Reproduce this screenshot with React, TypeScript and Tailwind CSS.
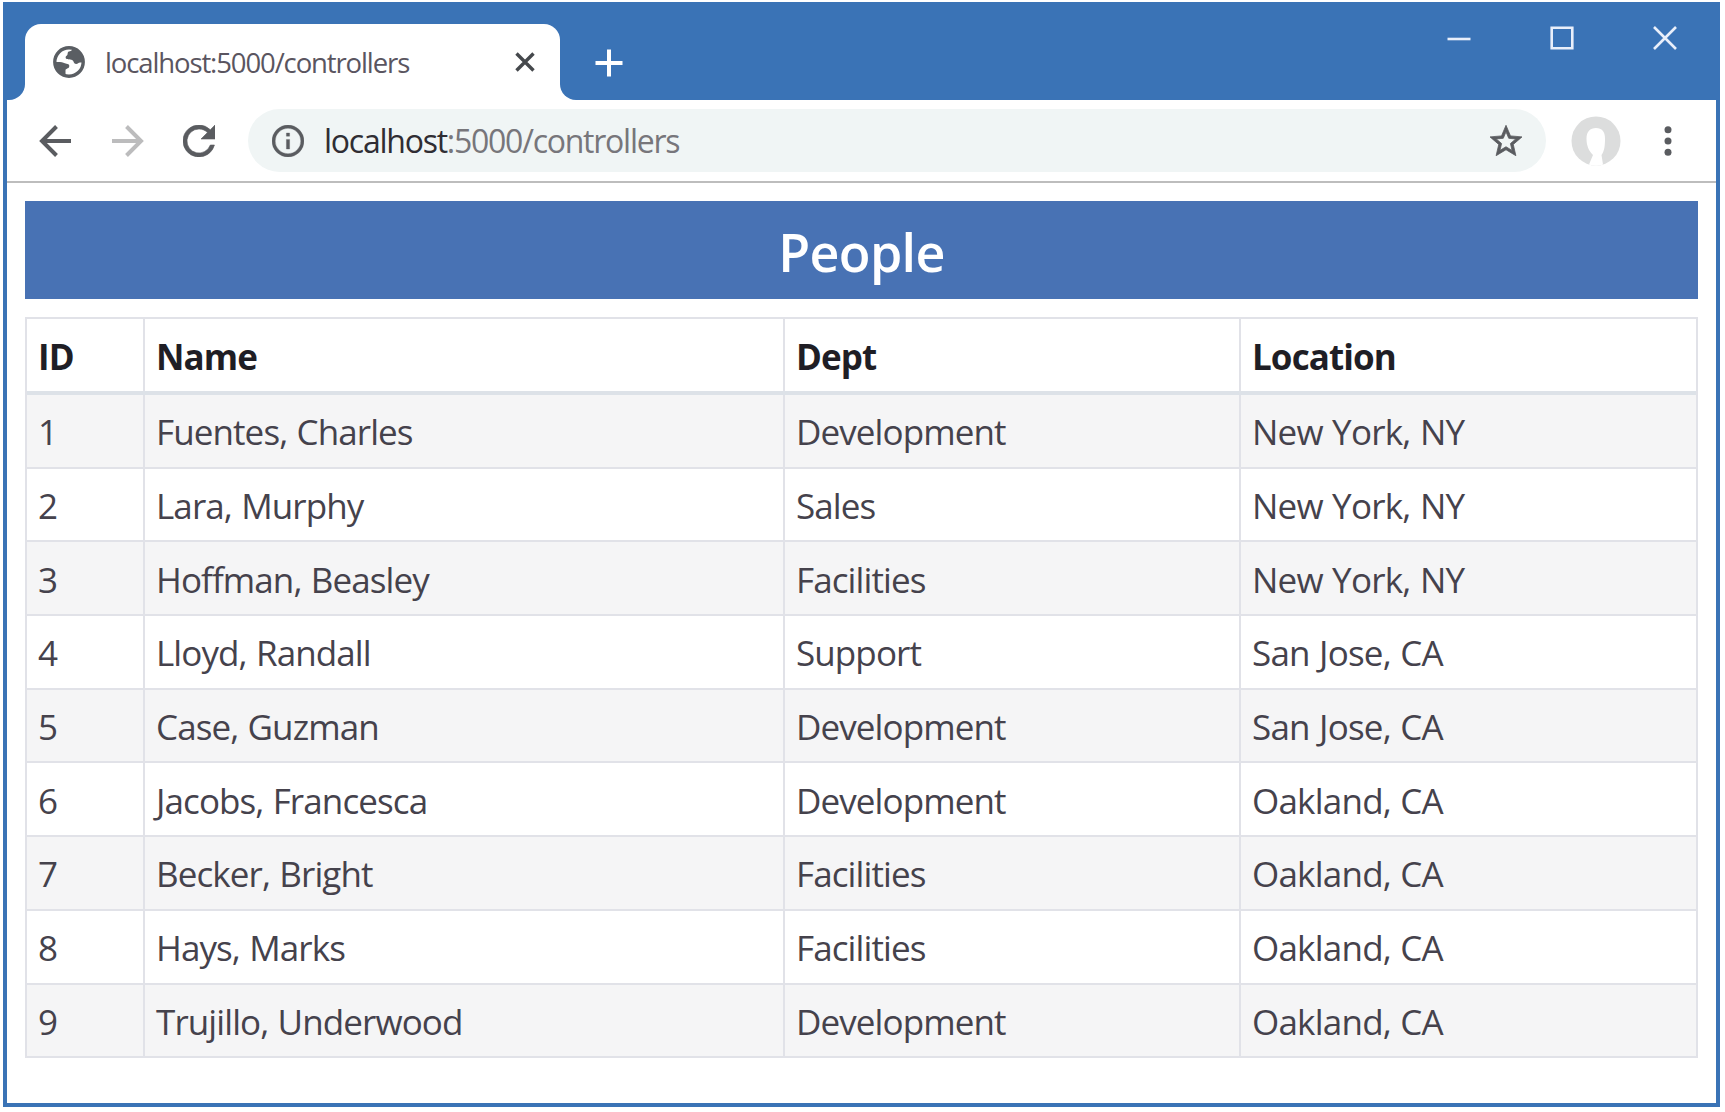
import React from "react";

const people = [
  ["1", "Fuentes, Charles", "Development", "New York, NY"],
  ["2", "Lara, Murphy", "Sales", "New York, NY"],
  ["3", "Hoffman, Beasley", "Facilities", "New York, NY"],
  ["4", "Lloyd, Randall", "Support", "San Jose, CA"],
  ["5", "Case, Guzman", "Development", "San Jose, CA"],
  ["6", "Jacobs, Francesca", "Development", "Oakland, CA"],
  ["7", "Becker, Bright", "Facilities", "Oakland, CA"],
  ["8", "Hays, Marks", "Facilities", "Oakland, CA"],
  ["9", "Trujillo, Underwood", "Development", "Oakland, CA"],
];

const columns = "grid grid-cols-[118px_640px_456px_1fr]";

function TitleBar() {
  return (
    <div className="flex h-[98px] shrink-0 items-end bg-[#3a73b6]">
      <div className="flex h-[76px] items-end">
        <div className="h-4 w-[18px] bg-white">
          <div className="h-4 w-[18px] rounded-br-2xl bg-[#3a73b6]" />
        </div>
        <div className="flex h-[76px] w-[535px] items-center rounded-t-2xl bg-white pl-7">
          <svg viewBox="0 0 32 32" className="h-8 w-8 shrink-0">
            <circle cx="16" cy="16" r="14.2" fill="none" stroke="#5a5e63" strokeWidth="3.4" />
            <path
              d="M1 16h6c3 0 4 1.500 6.500 1.700c3 .2 3 2 2.600 3.400c-.3 1.700-3.600 1.400-3.600 3.400v5C6 30 1 23 1 16zM20 2c-1 1.500-1 3-3 3.200c-2 .2-2.400 1.200-2.400 2.800c0 1.800-2 1.400-2 3.500c0 2.500 4.500 1.500 6.500 2.500c2 1 1.500 4 4 4c2 0 2-1.500 4-1.500h3.500C30 8 26 3 20 2z"
              fill="#5a5e63"
            />
          </svg>
          <span className="ml-5 w-[410px] whitespace-nowrap pt-px text-[27.500px] tracking-[-1.120px] text-[#5a5560]">
            localhost:5000/controllers
          </span>
          <svg viewBox="0 0 20 20" className="h-5 w-5 shrink-0" stroke="#45484c" strokeWidth="3.4">
            <path d="M1.500 1.500l17 17M18.500 1.500l-17 17" />
          </svg>
        </div>
        <div className="h-4 w-4 bg-white">
          <div className="h-4 w-4 rounded-bl-2xl bg-[#3a73b6]" />
        </div>
      </div>
      <svg viewBox="0 0 28 28" className="mb-[23px] ml-[19px] h-7 w-7" stroke="#fff" strokeWidth="4">
        <path d="M14 .5v27M.5 14h27" />
      </svg>
      <div className="mb-[50px] ml-auto mr-[39px] flex items-center gap-[79px]">
        <svg viewBox="0 0 24 24" className="h-6 w-6" stroke="#e9effa" strokeWidth="2.600">
          <path d="M.5 13h23" />
        </svg>
        <svg viewBox="0 0 24 24" className="h-6 w-6" fill="none" stroke="#e9effa" strokeWidth="2.600">
          <path d="M1.700 1.700h20.600v20.600H1.700z" />
        </svg>
        <svg viewBox="0 0 24 24" className="h-6 w-6" stroke="#e9effa" strokeWidth="2.600">
          <path d="M1 1l22 22M23 1L1 23" />
        </svg>
      </div>
    </div>
  );
}

function Toolbar() {
  return (
    <div className="flex h-[83px] shrink-0 items-center border-b-2 border-[#bdbdbd] pl-8">
      <svg viewBox="0 0 32 32" className="h-8 w-8" fill="none" stroke="#5a5c60" strokeWidth="4">
        <path d="M32 16H3M17.500 1.500L3 16l14.500 14.500" />
      </svg>
      <svg viewBox="0 0 32 32" className="ml-[41px] h-8 w-8" fill="none" stroke="#bcbcbd" strokeWidth="4">
        <path d="M0 16h29M14.500 1.500L29 16L14.500 30.500" />
      </svg>
      <svg viewBox="4 4 16 16" className="ml-[39px] h-8 w-8" fill="#5a5c60" stroke="#5a5c60" strokeWidth=".3">
        <path d="M17.650 6.350A7.958 7.958 0 0 0 12 4a8 8 0 1 0 7.730 10h-2.080A6 6 0 1 1 12 6c1.660 0 3.140.69 4.220 1.780L13 11h7V4l-2.350 2.350z" />
      </svg>
      <div className="ml-[33px] flex h-[63px] w-[1298px] items-center rounded-full bg-[#f0f5f5] pl-6 pr-6">
        <svg viewBox="2 2 20 20" className="h-8 w-8" fill="#5a5c60" stroke="#5a5c60" strokeWidth=".2">
          <path d="M11 7h2v2h-2zm0 4h2v6h-2zm1-9a10 10 0 1 0 0 20 10 10 0 0 0 0-20zm0 18a8 8 0 1 1 0-16 8 8 0 0 1 0 16z" />
        </svg>
        <span className="ml-5 whitespace-nowrap pt-px text-[32px] tracking-[-1.250px] text-[#77767b]">
          <span className="text-[#2f2d33]">localhost</span>:5000/controllers
        </span>
        <svg viewBox="2 2 20 19" className="ml-auto h-[31px] w-8" fill="#5a5c60" stroke="#5a5c60" strokeWidth=".5">
          <path d="M22 9.240l-7.190-.62L12 2 9.190 8.630 2 9.240l5.460 4.730L5.820 21 12 17.270 18.180 21l-1.630-7.030L22 9.240zM12 15.400l-3.760 2.270 1-4.280-3.320-2.880 4.380-.38L12 6.100l1.710 4.040 4.380.38-3.320 2.880 1 4.280L12 15.400z" />
        </svg>
      </div>
      <svg viewBox="0 0 50 50" className="ml-[25px] h-[50px] w-[50px]">
        <circle cx="25" cy="25" r="24.500" fill="#dcdddd" />
        <path
          d="M25 12c-6 0-9.500 4-9.500 10.500c0 7 2 12 6.500 16.500l-4 9.500c4 1.500 10 1.500 14 0L30.500 39c3-4 3.500-9.500 3.500-16.500C34 16 31 12 25 12z"
          fill="#fff"
        />
      </svg>
      <svg viewBox="0 0 8 32" className="ml-[43px] h-8 w-2" fill="#5a5c60">
        <circle cx="4" cy="4.800" r="3.500" />
        <circle cx="4" cy="16" r="3.500" />
        <circle cx="4" cy="27.200" r="3.500" />
      </svg>
    </div>
  );
}

function PeopleTable() {
  return (
    <div className="mt-[18px] border-x-2 border-t-2 border-[#e1e2e8] text-[35px] leading-none tracking-[-0.9px]">
      <div className={columns + " h-[76px] border-b-4 border-[#dde2e8] font-bold text-[#1f1e25]"}>
        {["ID", "Name", "Dept", "Location"].map((label) => (
          <div key={label} className="flex items-center border-r-2 border-[#e1e2e8] pl-[11px] pt-0.5 last:border-r-0">
            {label}
          </div>
        ))}
      </div>
      {people.map((person) => (
        <div
          key={person[0]}
          className={columns + " h-[73.700px] border-b-2 border-[#e1e2e8] text-[#45424c] even:bg-[#f5f5f6]"}
        >
          {person.map((value, i) => (
            <div
              key={i}
              className="flex items-center whitespace-nowrap border-r-2 border-[#e1e2e8] pl-[11px] pt-0.5 [word-spacing:1px] last:border-r-0 last:tracking-[-0.78px]"
            >
              {value}
            </div>
          ))}
        </div>
      ))}
    </div>
  );
}

export default function App() {
  return (
    <div className="h-[1112px] w-[1725px] bg-white pl-[3px] pt-[2px] font-['Open_Sans','Noto_Sans',sans-serif]">
      <div className="flex h-[1105px] w-[1717px] flex-col border-x-4 border-b-4 border-[#3a73b6] bg-white">
        <TitleBar />
        <Toolbar />
        <main className="pl-[18px] pr-[18px] pt-[18px]">
          <h1 className="flex h-[98px] items-center justify-center bg-[#4872b4] pt-[3px] text-[52px] font-semibold leading-none tracking-[-0.700px] text-white">
            People
          </h1>
          <PeopleTable />
        </main>
      </div>
    </div>
  );
}
